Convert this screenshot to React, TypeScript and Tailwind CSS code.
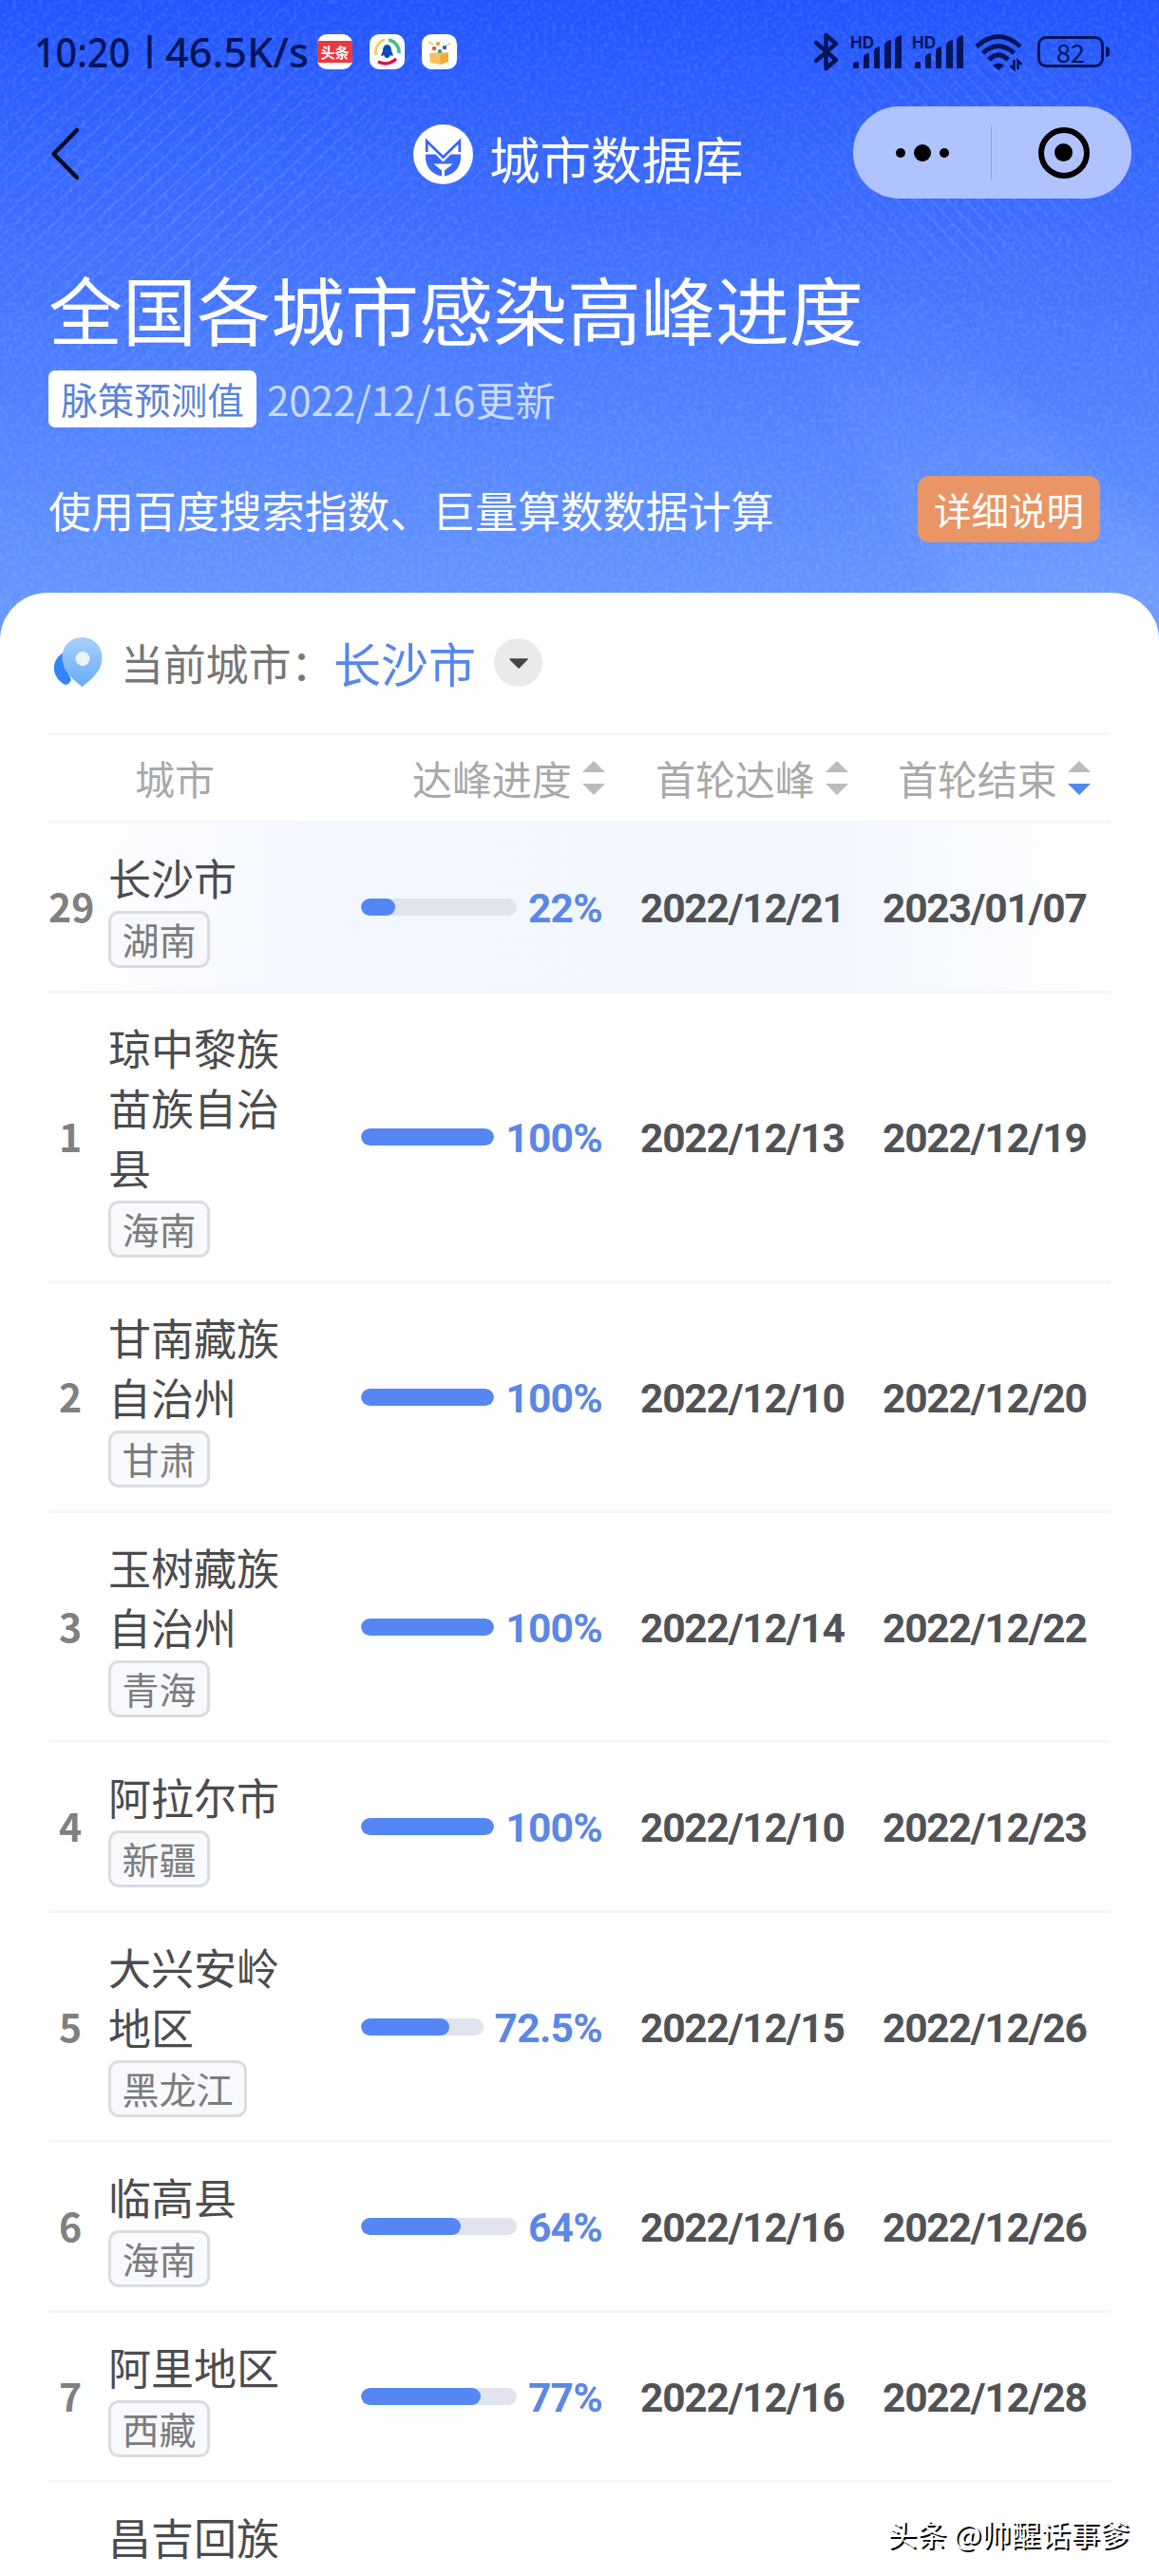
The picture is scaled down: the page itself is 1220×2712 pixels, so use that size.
import { clsx } from 'clsx'

interface CityRow {
  rank: number
  lines: string[]
  province: string
  progress: number
  peak: string
  end: string
  current?: boolean
}

const rows: CityRow[] = [
  { rank: 29, lines: ['长沙市'], province: '湖南', progress: 22, peak: '2022/12/21', end: '2023/01/07', current: true },
  { rank: 1, lines: ['琼中黎族', '苗族自治', '县'], province: '海南', progress: 100, peak: '2022/12/13', end: '2022/12/19' },
  { rank: 2, lines: ['甘南藏族', '自治州'], province: '甘肃', progress: 100, peak: '2022/12/10', end: '2022/12/20' },
  { rank: 3, lines: ['玉树藏族', '自治州'], province: '青海', progress: 100, peak: '2022/12/14', end: '2022/12/22' },
  { rank: 4, lines: ['阿拉尔市'], province: '新疆', progress: 100, peak: '2022/12/10', end: '2022/12/23' },
  { rank: 5, lines: ['大兴安岭', '地区'], province: '黑龙江', progress: 72.5, peak: '2022/12/15', end: '2022/12/26' },
  { rank: 6, lines: ['临高县'], province: '海南', progress: 64, peak: '2022/12/16', end: '2022/12/26' },
  { rank: 7, lines: ['阿里地区'], province: '西藏', progress: 77, peak: '2022/12/16', end: '2022/12/28' },
]

function HeaderTexture() {
  return (
    <svg className="absolute inset-0" width="1220" height="680" viewBox="0 0 1220 680">
      <defs>
        <pattern id="lines" width="14" height="14" patternUnits="userSpaceOnUse" patternTransform="rotate(47)">
          <rect width="2" height="14" fill="#8fb0ff" />
        </pattern>
        <pattern id="linesRight" width="13" height="13" patternUnits="userSpaceOnUse" patternTransform="rotate(-43)">
          <rect width="2" height="13" fill="#8fb0ff" />
        </pattern>
        <radialGradient id="fade" cx="0.4" cy="0.45" r="0.5">
          <stop offset="0" stopColor="#fff" stopOpacity="0.28" />
          <stop offset="1" stopColor="#fff" stopOpacity="0" />
        </radialGradient>
        <linearGradient id="beam" x1="0.2" y1="0" x2="0.7" y2="1">
          <stop offset="0" stopColor="#8fb0ff" stopOpacity="0" />
          <stop offset="1" stopColor="#8fb0ff" stopOpacity="0.26" />
        </linearGradient>
        <mask id="leftMask">
          <rect x="-120" y="-60" width="800" height="620" fill="url(#fade)" />
        </mask>
        <mask id="rightMask">
          <rect x="820" y="0" width="500" height="400" fill="url(#fade)" />
        </mask>
        <filter id="soft" x="-20%" y="-20%" width="140%" height="140%">
          <feGaussianBlur stdDeviation="14" />
        </filter>
        <filter id="grain" x="0" y="0" width="100%" height="100%">
          <feTurbulence type="fractalNoise" baseFrequency="0.22" numOctaves="2" seed="4" />
          <feColorMatrix values="0 0 0 0 1  0 0 0 0 1  0 0 0 0 1  1.2 0 0 0 -0.5" />
        </filter>
      </defs>
      <rect width="1220" height="680" fill="url(#lines)" mask="url(#leftMask)" />
      <rect width="1220" height="680" fill="url(#linesRight)" mask="url(#rightMask)" />
      <path d="M800 300 L960 320 L1240 590 L1240 720 L1060 720Z" fill="url(#beam)" filter="url(#soft)" />
      <rect width="1220" height="680" filter="url(#grain)" opacity="0.22" />
    </svg>
  )
}

function Signal() {
  return (
    <svg className="-mt-3" width="56" height="48" viewBox="0 -12 56 48" fill="#04145a">
      <text x="0" y="14" fontSize="18" fontWeight="700" fontFamily="Inter, sans-serif" textLength="25" lengthAdjust="spacingAndGlyphs">HD</text>
      <path d="M3 35v-4q0-3 3-3h3v7zM14 35V23q1-4 6-4v16zM25 35V17q0-4 6-5v23zM36 35V10q1-4 7-5v30zM47 35V5q1-4 7-5v35z" />
    </svg>
  )
}

function StatusBar() {
  return (
    <div className="flex h-[108px] items-start text-[#04145a]">
      <svg className="mt-[14px] ml-9" width="292" height="76" viewBox="0 -20 292 76" fill="#04145a" fontFamily="'Noto Sans', sans-serif" fontSize="43" fontWeight="500">
        <text x="0" y="37" textLength="101" lengthAdjust="spacingAndGlyphs">10:20</text>
        <rect x="119.500" y="3" width="4" height="35" />
        <text x="138" y="37" textLength="151" lengthAdjust="spacingAndGlyphs">46.5K/s</text>
      </svg>
      <div className="mt-9 ml-[6px] flex gap-[18px]">
        <div className="flex size-[37px] flex-col justify-center overflow-hidden rounded-[10px] bg-white">
          <div className="flex h-[23px] items-center justify-center bg-[#e83a3f] text-[15px] leading-none font-bold text-white">头条</div>
        </div>
        <svg className="rounded-[10px] bg-white" width="37" height="37" viewBox="0 0 37 37" fill="none">
          <path d="M7 22A13 13 0 0 1 16 6" stroke="#f3cf56" strokeWidth="3" />
          <path d="M20 6A13 13 0 0 1 31 20" stroke="#3fbf95" strokeWidth="3.500" />
          <path d="M9 29Q19 34 28 26" stroke="#d5144c" strokeWidth="3.500" />
          <path d="M18.500 11c-4 0-4.500 4-4.500 7-2 3-2 5-1 5l2-1q1 3 3.500 3t3.500-3l2 1c1 0 1-2-1-5 0-3-.5-7-4.500-7z" fill="#0b4db3" />
        </svg>
        <svg className="rounded-[10px] bg-white" width="37" height="37" viewBox="0 0 37 37">
          <path d="M8 20l20-1v10l-8 3-11-2z" fill="#f6c15c" />
          <path d="M19 22l9-2v9l-8 3z" fill="#f0ab3f" />
          <path d="M7 8l5 3M30 9l-5 4" stroke="#f3cf56" strokeWidth="1.500" />
          <circle cx="17" cy="10" r="2.200" fill="#eda15a" />
          <circle cx="13" cy="15" r="2.200" fill="#e0574a" />
          <circle cx="24" cy="14" r="2.300" fill="#3b6bb5" />
          <circle cx="19" cy="18" r="2.300" fill="#3aa387" />
        </svg>
      </div>
      <svg className="mt-[33px] ml-[375px]" width="28" height="43" viewBox="0 0 28 43" fill="none" stroke="#04145a" strokeWidth="4.500" strokeLinejoin="round" strokeLinecap="round">
        <path d="M3 12L24 30L13.500 39V4L24 13L3 31" />
      </svg>
      <div className="mt-[37px] ml-[11px] flex gap-[9px]">
        <Signal />
        <Signal />
      </div>
      <svg className="mt-[35px] ml-[10px]" width="52" height="40" viewBox="0 0 52 40" fill="none" stroke="#04145a" strokeWidth="5">
        <path d="M2 14Q25 -7 48 14" />
        <path d="M8.500 21Q25 6 41.500 21" />
        <path d="M15 28Q25 18 35 28" />
        <path d="M19 34q6-5 12 0l-6 5z" fill="#04145a" stroke="none" />
        <path d="M41.500 28v10l-4-4M45.500 38V29l4 4" strokeWidth="2.500" />
      </svg>
      <div className="mt-[38px] ml-[14px] flex items-center gap-[2px]">
        <div className="flex h-[33px] w-[70px] items-center justify-center rounded-[9px] border-[3.500px] border-[#04145a] text-[27px] leading-none">
          82
        </div>
        <div className="h-[11px] w-1 rounded-r-sm bg-[#04145a]" />
      </div>
    </div>
  )
}

function NavBar() {
  return (
    <div className="flex h-[109px] items-start">
      <svg className="mt-[25px] ml-[52px]" width="34" height="58" viewBox="0 0 34 58" fill="none" stroke="#030a24" strokeWidth="4.500" strokeLinecap="round" strokeLinejoin="round">
        <path d="M29 4L4.500 29L29 54" />
      </svg>
      <svg className="mt-[23px] ml-[349px]" width="63" height="63" viewBox="0 0 63 63">
        <circle cx="31.500" cy="31.500" r="31.500" fill="#fff" />
        <path d="M14.200 29V17.500L31.500 34.500L48.800 17.500V29" fill="none" stroke="#3a68fb" strokeWidth="2.800" />
        <path d="M13 31.500H23.500L31.500 39.500L39.500 31.500H50C51 43 45 52 33 54.500V48.500L41.500 41.500H21.500L30 48.500V54.500C18 52 12 43 13 31.500z" fill="#3a68fb" />
      </svg>
      <span className="mt-[22px] ml-[17px] w-[275px] text-[53.500px] leading-[72px] text-white">城市数据库</span>
      <div className="mt-1 ml-[108px] flex h-[97px] w-[293px] items-center rounded-full bg-[#b1c3ff]">
        <div className="flex flex-1 items-center justify-center gap-[9px] pl-0.5">
          <span className="size-2.5 rounded-full bg-black" />
          <span className="size-[18px] rounded-full bg-black" />
          <span className="size-2.5 rounded-full bg-black" />
        </div>
        <div className="h-[58px] w-px bg-[#8fa3e6]" />
        <div className="flex flex-1 items-center justify-center pl-[5px]">
          <div className="flex size-[54px] items-center justify-center rounded-full border-[6.500px] border-black">
            <div className="size-[19px] rounded-full bg-black" />
          </div>
        </div>
      </div>
    </div>
  )
}

function SortArrows({ active }: { active?: boolean }) {
  return (
    <svg className="ml-[11px] shrink-0" width="24" height="36" viewBox="0 0 24 36">
      <path d="M12 0L24 12H0z" fill="#bcbcbc" />
      <path d="M12 36L24 24H0z" fill={active ? '#5186f3' : '#bcbcbc'} />
    </svg>
  )
}

function TableRow({ row }: { row: CityRow }) {
  return (
    <div
      className={clsx(
        'flex items-center border-b-[3px] border-[#f5f6f8]',
        row.current && 'bg-[linear-gradient(90deg,#fff,#f3f7fe_25%,#f2f7fe_75%,#fff)]'
      )}
    >
      <div className="w-[46px] pb-[3px] text-center text-[41px] leading-none font-bold text-[#808080]">{row.rank}</div>
      <div className="ml-[17px] w-[216px] pt-[27px] pb-6">
        {row.lines.map((line) => (
          <div key={line} className="h-[63px] text-[45px] leading-[60px] text-[#4c4c4e]">{line}</div>
        ))}
        <div className="mt-0.5 inline-flex h-[60px] items-center rounded-[11px] border-[3px] border-[#d9dce0] bg-[#f7f9fc] px-[11.500px] pb-px align-top text-[39px] leading-none text-[#7c7c7e]">
          {row.province}
        </div>
      </div>
      <div className="ml-[50px] flex w-[254px] items-center gap-[12px]">
        <div className="h-[18px] flex-1 overflow-hidden rounded-full bg-[#e1e4ec]">
          <div className="h-full rounded-full bg-[#5587f4]" style={{ width: `${row.progress}%` }} />
        </div>
        <span className="pt-[5px] font-[Roboto] text-[42.500px] leading-none font-bold tracking-[-0.7px] text-[#5b87e6]">{row.progress}%</span>
      </div>
      <div className="ml-[40px] w-[215px] pt-[5px] font-[Roboto] text-[42.500px] leading-none font-bold tracking-[-1.2px] whitespace-nowrap text-[#515256]">{row.peak}</div>
      <div className="ml-[40px] w-[215px] pt-[5px] font-[Roboto] text-[42.500px] leading-none font-bold tracking-[-1.2px] whitespace-nowrap text-[#515256]">{row.end}</div>
    </div>
  )
}

export default function App() {
  return (
    <div className="relative h-[2712px] w-[1220px] overflow-hidden bg-linear-to-b from-[#2052ff] via-[#3f6fff] via-[260px] to-[#6696ff] to-[640px] font-['Noto_Sans_CJK_SC',sans-serif]">
      <HeaderTexture />
      <div className="relative">
        <StatusBar />
        <NavBar />
        <div className="flex h-[407px] flex-col px-[51px]">
          <h1 className="mt-[58px] text-[78px] leading-[98px] whitespace-nowrap text-white">全国各城市感染高峰进度</h1>
          <div className="mt-[17px] flex items-center">
            <span className="flex h-[60px] w-[219px] items-center justify-center rounded-[7px] bg-white pb-px text-[38.500px] leading-none text-[#5b84d8]">脉策预测值</span>
            <span className="ml-[11px] text-[42px] leading-none text-[#c9daff]">2022/12/16更新</span>
          </div>
          <div className="mt-[51px] flex items-center justify-between pr-[11px]">
            <span className="text-[45px] leading-none tracking-[-0.1px] text-white">使用百度搜索指数、巨量算数数据计算</span>
            <span className="flex h-[70px] w-[192px] items-center justify-center rounded-[12px] bg-[#e99566] pb-px text-[39.500px] leading-none text-white">详细说明</span>
          </div>
        </div>

        <div className="h-[2088px] overflow-hidden rounded-t-[50px] bg-white px-[51px]">
          <div className="flex h-[147px] items-center pb-[1px]">
            <svg className="ml-[2px]" width="56" height="56" viewBox="0 0 56 56">
              <defs>
                <linearGradient id="pin" x1="0.5" y1="0" x2="0.5" y2="1">
                  <stop offset="0" stopColor="#a9d0f9" />
                  <stop offset="1" stopColor="#66acfa" />
                </linearGradient>
              </defs>
              <path d="M14 18C0 26 1 43 14 51Q18 54 22 47L14 28z" fill="#3186fb" />
              <path d="M33.500 2c12 0 21 9 21 21 0 15-12 24-21 31-9-7-21-16-21-31C12.500 11 21.500 2 33.500 2z" fill="url(#pin)" />
              <circle cx="34" cy="24.500" r="7.500" fill="#eaf4fe" />
            </svg>
            <span className="ml-[18px] text-[45px] leading-none tracking-[-0.2px] text-[#777]">当前城市：</span>
            <span className="text-[50px] leading-none text-[#5587f0]">长沙市</span>
            <div className="ml-[19px] flex size-[51px] items-center justify-center rounded-full bg-[#eaeaed]">
              <svg className="mt-[3px]" width="20" height="11" viewBox="0 0 20 11">
                <path d="M1 1H19L10 10z" fill="#444" stroke="#444" strokeWidth="1.500" strokeLinejoin="round" />
              </svg>
            </div>
          </div>

          <div className="flex h-[96px] items-center border-y-[3px] border-[#f5f6f8] text-[42px] leading-none tracking-[-0.1px] text-[#a9a9a9]">
            <span className="ml-[91px] w-[292px]">城市</span>
            <div className="flex w-[256px] items-center"><span>达峰进度</span><SortArrows /></div>
            <div className="flex w-[255px] items-center"><span>首轮达峰</span><SortArrows /></div>
            <div className="flex items-center"><span>首轮结束</span><SortArrows active /></div>
          </div>

          {rows.map((row) => (
            <TableRow key={row.rank} row={row} />
          ))}
          <div className="pt-[27px] pl-[63px] text-[45px] leading-[60px] text-[#4c4c4e]">昌吉回族</div>
        </div>
      </div>

      <div className="absolute top-[2647px] left-[934px] text-[31px] leading-[40px] tracking-[0.2px] whitespace-nowrap text-white [text-shadow:2px_2px_0_#000]">
        头条 @帅醒话事爹
      </div>
    </div>
  )
}
